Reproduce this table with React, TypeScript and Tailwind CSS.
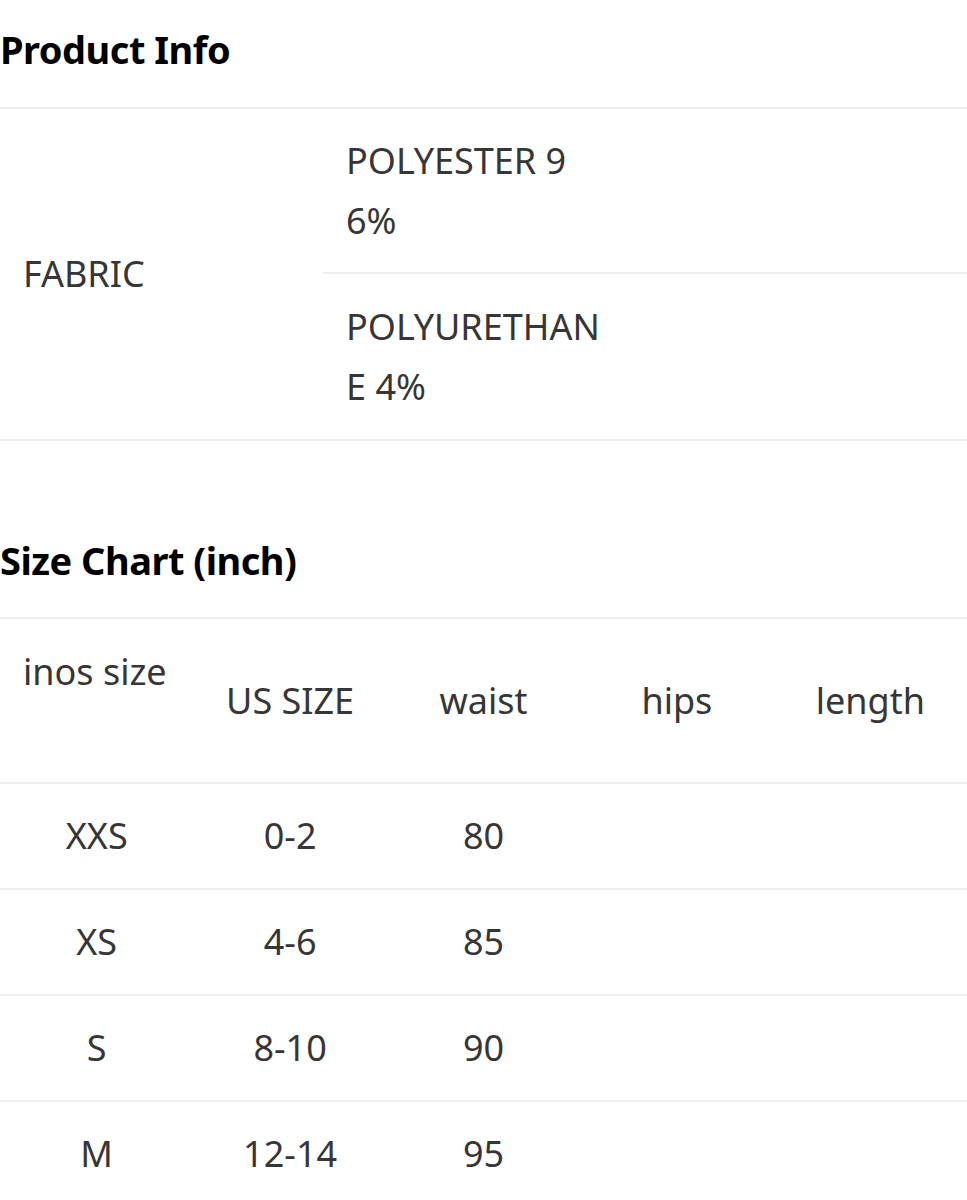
import React from 'react';

const sizes = [
  { inos: 'XXS', us: '0-2', waist: '80' },
  { inos: 'XS', us: '4-6', waist: '85' },
  { inos: 'S', us: '8-10', waist: '90' },
  { inos: 'M', us: '12-14', waist: '95' },
];

const fabric = [
  ['POLYESTER 9', '6%'],
  ['POLYURETHAN', 'E 4%'],
];

export default function App() {
  return (
    <div className="w-[967px] h-[1200px] overflow-hidden bg-white text-[#363636]" style={{ fontFamily: '"Noto Sans", "Open Sans", sans-serif' }}>
      <h2 className="flex h-[107px] items-center pb-2 text-[38px] font-bold text-black tracking-[-0.5px]">
        Product Info
      </h2>

      <div className="grid grid-cols-[323px_1fr] border-y-2 border-[#eeeeee]">
        <div className="flex items-center pl-[23px] text-[36px]">FABRIC</div>
        <div>
          {fabric.map((lines, i) => (
            <div
              key={i}
              className={`flex h-[165px] flex-col justify-center pl-[23px] text-[36px] leading-[60px] ${i === 0 ? 'border-b-2 border-[#eeeeee]' : ''}`}
            >
              {lines.map((l) => (
                <span key={l}>{l}</span>
              ))}
            </div>
          ))}
        </div>
      </div>

      <h2 className="mt-[62px] flex h-[114px] items-center text-[38px] font-bold text-black tracking-[-0.5px]">
        Size Chart (inch)
      </h2>

      <div className="border-t-2 border-[#eeeeee] text-[36px]">
        <div className="grid h-[165px] grid-cols-5 border-b-2 border-[#eeeeee]">
          <div className="pl-[23px] pt-[28px] leading-[50px]">inos size</div>
          <div className="flex items-center justify-center">US SIZE</div>
          <div className="flex items-center justify-center">waist</div>
          <div className="flex items-center justify-center">hips</div>
          <div className="flex items-center justify-center">length</div>
        </div>
        {sizes.map((s) => (
          <div key={s.inos} className="grid h-[106px] grid-cols-5 border-b-2 border-[#eeeeee]">
            <div className="flex items-center justify-center">{s.inos}</div>
            <div className="flex items-center justify-center">{s.us}</div>
            <div className="flex items-center justify-center">{s.waist}</div>
            <div />
            <div />
          </div>
        ))}
      </div>
    </div>
  );
}
